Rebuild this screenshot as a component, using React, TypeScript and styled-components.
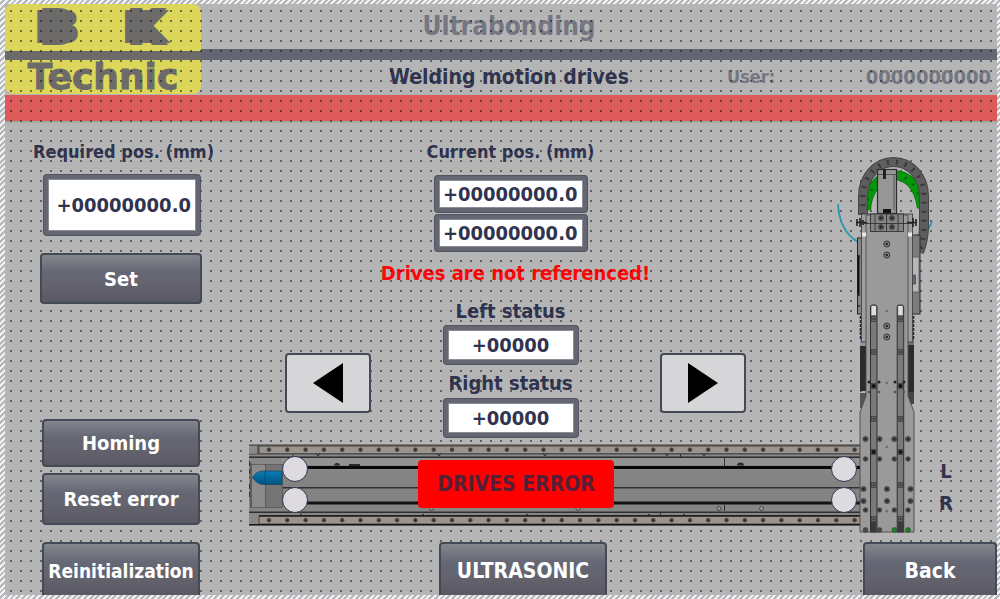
import React from "react";
import styled, { createGlobalStyle, css } from "styled-components";

const ink = "#31344f";
const faded = "#747682";
const steel = "#646672";
const edge = "#434a55";

const GlobalStyle = createGlobalStyle`
  *, *::before, *::after { box-sizing: border-box; }
  body { margin: 0; background: #b5b5b5; }
  body, button, input {
    font-family: "DejaVu Sans Condensed", "DejaVu Sans", Tahoma, sans-serif;
    font-size: 20px;
    font-weight: 700;
    line-height: 24px;
  }
`;

const Screen = styled.div`
  min-height: 100vh;
  padding: 4px 3px 4px 5px;
  background: repeating-linear-gradient(135deg, #f2f2f2 0 2px, #b4b8bd 2px 4px);
`;

/* Work area with the editor's 10px snap grid laid over everything but the controls. */
const Canvas = styled.div`
  position: relative;
  display: flex;
  flex-direction: column;
  min-height: calc(100vh - 8px);
  background: #b5b5b5;
  color: ${ink};

  &::after {
    content: "";
    position: absolute;
    inset: 0;
    z-index: 1;
    pointer-events: none;
    background: conic-gradient(from 0deg at 2px 2px, transparent 0 75%, rgba(20, 20, 24, 0.52) 75%) 5px 6px / 10px 10px;
  }
`;

const Header = styled.header`
  display: grid;
  grid-template-columns: 196px 90px 1fr 90px 180px;
  grid-template-rows: 45px 11px 35px;
  align-items: center;
`;

const Logo = styled.div`
  grid-area: 1 / 1 / 4 / 2;
  align-self: stretch;
  display: grid;
  grid-template-rows: 47px 9px 34px;
  margin-bottom: 1px;
  border-radius: 8px;
  background: #dcd65a;
  color: #6c6b69;
  font-family: "DejaVu Sans", sans-serif;
`;

const Initials = styled.div`
  display: grid;
  grid-template-columns: 1fr 1fr;
  padding: 0 12px 0 8px;
  justify-items: center;
  font-size: 44px;
  line-height: 47px;
  -webkit-text-stroke: 4px #6c6b69;
  text-shadow: -7px 0 #6c6b69, 7px 0 #6c6b69;
`;

const LogoBar = styled.div`
  background: #6c6b69;
`;

const LogoName = styled.div`
  text-align: center;
  font-size: 36px;
  line-height: 34px;
  -webkit-text-stroke: 1px #6c6b69;
`;

const Title = styled.h1`
  grid-area: 1 / 3;
  margin: 0;
  padding-bottom: 2px;
  text-align: center;
  font-size: 26px;
  line-height: 32px;
  color: ${faded};
`;

const Divider = styled.div`
  grid-area: 2 / 2 / 3 / 6;
  align-self: stretch;
  background: ${steel};
`;

const Subtitle = styled.h2`
  grid-area: 3 / 3;
  margin: 0;
  padding-bottom: 2px;
  text-align: center;
  white-space: nowrap;
  font-size: 21px;
`;

const UserLabel = styled.span`
  grid-area: 3 / 4;
  padding-bottom: 2px;
  font-size: 18px;
  color: ${faded};
`;

const UserName = styled.span`
  grid-area: 3 / 5;
  padding: 0 6px 2px 0;
  text-align: right;
  color: ${faded};
`;

const AlarmLine = styled.div`
  height: 28px;
  background: #dc5b5a;
  border-bottom: 2px solid #a2aca3;
`;

const Main = styled.main`
  flex: 1;
  display: grid;
  grid-template-columns: 244px minmax(0, 1fr) 100px 62px;
`;

const SidePanel = styled.section`
  display: flex;
  flex-direction: column;
  align-items: flex-start;
  padding: 17px 0 0 28px;
`;

const Label = styled.label`
  white-space: nowrap;
`;

const PositionLabel = styled(Label)`
  font-size: 18px;
`;

const Field = styled.input<{ $width: number; $height: number; $centered?: boolean }>`
  position: relative;
  z-index: 2;
  width: ${(p) => p.$width}px;
  height: ${(p) => p.$height}px;
  padding: 0 ${(p) => (p.$centered ? 0 : 5)}px 0 0;
  border: 5px solid ${steel};
  border-radius: 4px;
  outline: 1px solid #505460;
  outline-offset: -1px;
  background: #fff;
  box-shadow: inset 0 0 0 1px #8b8d98;
  color: ${ink};
  text-align: ${(p) => (p.$centered ? "center" : "right")};
`;

const raised = css`
  position: relative;
  z-index: 2;
  border: 2px solid ${edge};
  border-radius: 4px;
  padding: 0;
`;

const Button = styled.button<{ $width: number; $height: number }>`
  ${raised}
  width: ${(p) => p.$width}px;
  height: ${(p) => p.$height}px;
  background: linear-gradient(#84868d 0, #656775 36%, #64646f 60%, #5a5963 100%);
  color: #fff;
  white-space: nowrap;
`;

const PositionForm = styled.div`
  display: flex;
  flex-direction: column;
  gap: 10px;
  align-items: flex-start;

  ${Field} { margin-left: 10px; }
  ${Button} { margin: 7px 0 0 7px; }
`;

const DriveButtons = styled.div`
  display: flex;
  flex-direction: column;
  gap: 6px;
  margin: 115px 0 0 9px;
`;

const Stage = styled.section`
  padding-top: 17px;
`;

const Readings = styled.div`
  display: grid;
  grid-template-columns: 86px 1fr 86px;
  align-items: end;
  height: 299px;
  padding: 0 89px 0 36px;
`;

const JogButton = styled.button`
  ${raised}
  display: grid;
  place-items: center;
  height: 60px;
  margin-bottom: 26px;
  background: #d6d6d8;
`;

const Values = styled.div`
  align-self: start;
  display: flex;
  flex-direction: column;
  align-items: center;
`;

const ValueGroup = styled.div<{ $top: number; $gap: number }>`
  display: flex;
  flex-direction: column;
  align-items: center;
  margin-top: ${(p) => p.$top}px;
  padding-right: 10px;

  ${Label} { margin-bottom: ${(p) => p.$gap}px; }
  ${Field} + ${Field} { margin-top: 1px; }
`;

const Warning = styled.p`
  margin: 9px 0 0;
  white-space: nowrap;
  color: #ff0508;
`;

const RailArea = styled.div`
  position: relative;
  z-index: 2;
  height: 82px;
  margin: 5px -26px 0 0;
`;

const RailSvg = styled.svg`
  display: block;
  width: 100%;
  height: 82px;
`;

const Lamp = styled.span<{ $side: "left" | "right"; $row: number }>`
  position: absolute;
  top: ${(p) => (p.$row === 0 ? 12 : 43)}px;
  ${(p) => (p.$side === "left" ? "left: 33px;" : "right: 4px;")}
  width: 26px;
  height: 26px;
  border: 1px solid #34364f;
  border-radius: 50%;
  background: #dddbdf;
`;

const ErrorBanner = styled.div`
  position: absolute;
  top: 16px;
  left: 169px;
  right: 247px;
  height: 48px;
  border-radius: 4px;
  background: #f00;
  color: #542038;
  text-align: center;
  font-size: 21px;
  line-height: 48px;
`;

const ArmSvg = styled.svg`
  position: relative;
  z-index: 2;
  display: block;
  margin-top: 27px;
`;

const DriveNames = styled.div`
  display: flex;
  flex-direction: column;
  gap: 8px;
  padding: 336px 0 0 4px;
`;

const DriveName = styled.span`
  width: 14px;
  text-align: center;
`;

const Footer = styled.nav`
  display: grid;
  grid-template-columns: 244px 1fr 200px;
  height: 53px;
`;

const FooterCell = styled.div<{ $place: "start" | "center" | "end" }>`
  display: flex;
  justify-content: ${(p) => p.$place};
  padding-left: ${(p) => (p.$place === "start" ? 37 : 0)}px;
`;

/* Footer keys run past the lower edge of the screen. */
const FooterButton = styled(Button)<{ $long?: boolean }>`
  padding-top: 2px;
  border-bottom: 0;
  border-radius: 4px 4px 0 0;
  font-size: ${(p) => (p.$long ? 19 : 21)}px;
`;

function Bolt({ x, y, r = 2.6 }: { x: number; y: number; r?: number }) {
  return (
    <g>
      <circle cx={x} cy={y} r={r} fill="#4c4c4c" stroke="#383838" strokeWidth="0.6" />
      <circle cx={x} cy={y} r={r * 0.4} fill="#1c1c1c" />
    </g>
  );
}

function Rail() {
  const bolts = Array.from({ length: 33 }, (_, i) => 269 + i * 18.3);
  return (
    <RailSvg viewBox="249 444 612 82" preserveAspectRatio="none" aria-hidden="true">
      <defs>
        <linearGradient id="bed" x1="0" y1="0" x2="0" y2="1">
          <stop offset="0" stopColor="#8c8c8c" />
          <stop offset="0.5" stopColor="#828282" />
          <stop offset="1" stopColor="#888" />
        </linearGradient>
        <linearGradient id="tip" x1="0" y1="0" x2="0" y2="1">
          <stop offset="0" stopColor="#0a7cb8" />
          <stop offset="1" stopColor="#00547f" />
        </linearGradient>
      </defs>
      <rect x="249" y="444.5" width="612" height="81" fill="url(#bed)" />
      <rect x="249" y="444.5" width="612" height="1.5" fill="#555" />
      {[446, 516.5].map((y) => (
        <g key={y}>
          <rect x="259" y={y} width="602" height="7.5" fill="#9b938c" stroke="#4a4744" strokeWidth="1" />
          {bolts.map((x) => (
            <Bolt key={x} x={x} y={y + 3.7} r={1.9} />
          ))}
        </g>
      ))}
      <rect x="249" y="453.6" width="612" height="1.4" fill="#666" />
      <rect x="249" y="456.5" width="612" height="1.4" fill="#252525" />
      <rect x="282" y="458" width="579" height="7" fill="#939393" />
      <rect x="282" y="466" width="579" height="3" fill="#080808" />
      <rect x="282" y="487" width="579" height="1.5" fill="#303030" />
      <rect x="282" y="501.5" width="579" height="3" fill="#141414" />
      <rect x="249" y="511.5" width="612" height="1.5" fill="#303030" />
      <rect x="259" y="515" width="602" height="1.4" fill="#222" />
      <rect x="249" y="524" width="612" height="1.5" fill="#151515" />
      <path d="M251 463V508M258 446V454M724.5 457V466M680.5 454V457M293 454V457M724.5 505V511M660.5 512V516" stroke="#333" strokeWidth="1" />
      <path d="M249.5 461V478M249.5 484V500" stroke="#333" strokeWidth="1" strokeDasharray="5 3" />
      <rect x="251.5" y="464.5" width="14" height="43" fill="#8b8b8b" stroke="#555" strokeWidth="0.7" />
      <rect x="265.5" y="464.5" width="17" height="43" fill="#747474" stroke="#555" strokeWidth="0.7" />
      <path d="M252.5 477.5C256 472.5 259 471 264 471H282V484.5H264C259 484.5 256 482.5 252.5 477.5Z" fill="url(#tip)" stroke="#1b4460" strokeWidth="0.7" />
      <path d="M265 471V484.5" stroke="#064a70" strokeWidth="0.8" />
      <path d="M334 465.5a3 2.5 0 0 1 6 0ZM349 464h11v2h-11ZM737 465.5a3.5 3 0 0 1 7 0Z" fill="#2a2a2a" />
      <path d="M316 453l2 3 2-3M437 453l2 3 2-3M543 453l2 3 2-3M665 453l2 3 2-3M702 453l2 3 2-3M299 516l2-2 2 2M421 516l2-2 2 2M525 516l2-2 2 2M647 516l2-2 2 2M682 516l2-2 2 2" fill="none" stroke="#333" strokeWidth="1" />
      {[431.5, 578, 719, 761.5].map((x) => (
        <circle key={x} cx={x} cy="508.5" r="2" fill="#999" stroke="#333" strokeWidth="0.8" />
      ))}
    </RailSvg>
  );
}

function Arm() {
  const chain = "M863 215V196A30.5 34 0 0 1 924 196V225Q924 240 919 252";
  const hose = "M866 210C868 168 916 160 922 208";
  return (
    <ArmSvg width="100" height="384" viewBox="835 150 100 384" aria-hidden="true">
      <path d="M838 204C839 222 846 235 858 242" fill="none" stroke="#2798b3" strokeWidth="1.8" />
      <path d="M932 221Q930 228 926 231" fill="none" stroke="#2798b3" strokeWidth="1.8" />
      <path d={hose} fill="none" stroke="#087a12" strokeWidth="10" />
      <path d={hose} fill="none" stroke="#05980a" strokeWidth="8" />
      <path d={hose} fill="none" stroke="#125f16" strokeWidth="3" strokeDasharray="2 8" />
      <path d={chain} fill="none" stroke="#444" strokeWidth="10" />
      <path d={chain} fill="none" stroke="#5e5e5e" strokeWidth="8" />
      <path d={chain} fill="none" stroke="#3a3a3a" strokeWidth="5" strokeDasharray="2 7" />

      {/* side plates and carriers */}
      <rect x="857.5" y="238" width="5" height="76" fill="#858585" stroke="#222" strokeWidth="1" />
      <path d="M858.5 255V294" stroke="#111" strokeWidth="2" />
      <path d="M857 257h4M857 295h4M857 306h4M860.5 316V340M913.5 316V340" stroke="#222" strokeWidth="1.5" strokeDasharray="3 1" />
      <rect x="912" y="235" width="8" height="79" fill="#7c7c7c" stroke="#2b2b2b" strokeWidth="1" />
      <rect x="912.5" y="257" width="6.5" height="35" fill="#b6b6b8" stroke="#555" strokeWidth="0.7" />
      <rect x="912" y="275" width="3.5" height="9" fill="#71607a" stroke="#333" strokeWidth="0.6" />
      <rect x="860" y="339" width="7" height="7" fill="#9295aa" />
      <rect x="907" y="339" width="7" height="7" fill="#6f707c" />
      <rect x="860" y="346" width="6" height="45" fill="#2c2c2c" />
      <rect x="908" y="345" width="6" height="47" fill="#2c2c2c" />
      <rect x="860" y="393" width="6" height="15" fill="#555" />
      <rect x="908" y="392" width="6" height="12" fill="#444" />

      <rect x="861.5" y="214" width="51" height="128" fill="#9f9f9f" stroke="#4a4a4a" strokeWidth="1" />
      <path d="M866 215V396L860 412V532H914V412L908 396V215Z" fill="#9a9a9a" stroke="#4a4a4a" strokeWidth="0.9" />
      <rect x="862" y="232.5" width="4" height="4" fill="#e9e9e9" />
      <rect x="908" y="232.5" width="4" height="4" fill="#e9e9e9" />
      <path d="M857 219v7M860 218v9M863 220v5M856 222.5h11M913 218v9M916 219v7M907 222.5h10" stroke="#222" strokeWidth="1.6" />

      {/* motor */}
      <rect x="877.5" y="169.5" width="19" height="44" fill="#969696" stroke="#2c2c2c" strokeWidth="1.2" />
      <path d="M877 174.5h20M894 175v35" stroke="#444" strokeWidth="0.8" />
      <rect x="883" y="169" width="3" height="10" fill="#222" />
      <path d="M883 209h8v4h-8z" fill="#151515" />
      <rect x="870.5" y="214" width="33" height="17.5" fill="#858585" stroke="#333" strokeWidth="0.9" />
      <path d="M862 223.5H912M875 214v17M886.5 214v17M898 214v17" stroke="#333" strokeWidth="0.9" />
      {[881, 892].map((x) => (
        <g key={x}>
          <Bolt x={x} y={218} />
          <Bolt x={x} y={227} />
        </g>
      ))}
      {[244, 255, 326, 337].map((y) => (
        <g key={y}>
          <circle cx="886.8" cy={y} r="3" fill="#858585" stroke="#333" strokeWidth="1" />
          <circle cx="886.8" cy={y} r="1.2" fill="#222" />
        </g>
      ))}

      {/* guide rails */}
      {[870.5, 897.2].map((x) => (
        <g key={x}>
          <path d={`M${x} 532V307q0-2 2-2h2.5q2 0 2 2V532Z`} fill="#7a7a7a" stroke="#303030" strokeWidth="1" />
          <rect x={x + 1} y="306" width="4.5" height="9" fill="#dedede" />
          {[319, 352, 386, 419, 452, 485, 519].map((y) => (
            <g key={y}>
              <rect x={x + 1} y={y - 2.5} width="4.5" height="5" fill="#666" stroke="#333" strokeWidth="0.6" />
              <circle cx={x + 3.2} cy={y} r={y === 386 || y === 452 ? 2 : 1.3} fill={y === 386 || y === 452 ? "#111" : "#444"} />
            </g>
          ))}
          <rect x={x + 0.5} y="522" width="5.5" height="10" fill="#3a3a3a" />
        </g>
      ))}
      {[865.5, 879.5, 894.3, 908].map((x) => (
        <g key={x}>
          <Bolt x={x} y={439} />
          <Bolt x={x} y={459} r={2.3} />
          <Bolt x={x} y={510} r={2.3} />
          <circle cx={x} cy="530" r="2.4" fill={x > 890 ? "#138a1c" : "#4a4a4a"} stroke="#333" strokeWidth="0.6" />
        </g>
      ))}
      {[863.5, 887, 910.5].map((x) => (
        <g key={x}>
          <Bolt x={x} y={489} />
          <Bolt x={x} y={501} />
        </g>
      ))}
      {[869, 879, 895, 904].map((x) => (
        <g key={x}>
          <circle cx={x} cy="382" r="1.5" fill="#222" />
          <circle cx={x} cy="392" r="1.3" fill="#555" />
        </g>
      ))}
      {[311, 383, 447, 511].map((y) => (
        <circle key={y} cx="886.8" cy={y} r="1.2" fill="#6a6a6a" />
      ))}
    </ArmSvg>
  );
}

export default function App() {
  return (
    <>
      <GlobalStyle />
      <Screen>
        <Canvas>
          <Header>
            <Logo>
              <Initials>
                <span>B</span>
                <span>K</span>
              </Initials>
              <LogoBar />
              <LogoName>Technic</LogoName>
            </Logo>
            <Title>Ultrabonding</Title>
            <Divider />
            <Subtitle>Welding motion drives</Subtitle>
            <UserLabel>User:</UserLabel>
            <UserName>0000000000</UserName>
          </Header>
          <AlarmLine />

          <Main>
            <SidePanel>
              <PositionForm>
                <PositionLabel htmlFor="required">Required pos. (mm)</PositionLabel>
                <Field id="required" $width={158} $height={62} defaultValue="+00000000.0" />
                <Button type="button" $width={162} $height={51}>Set</Button>
              </PositionForm>
              <DriveButtons>
                <Button type="button" $width={158} $height={48}>Homing</Button>
                <Button type="button" $width={158} $height={52}>Reset error</Button>
              </DriveButtons>
            </SidePanel>

            <Stage>
              <Readings>
                <JogButton type="button" aria-label="Move left">
                  <svg width="32" height="40" viewBox="0 0 32 40" aria-hidden="true">
                    <path d="M31 0V40L1 20Z" />
                  </svg>
                </JogButton>
                <Values>
                  <ValueGroup $top={0} $gap={11}>
                    <PositionLabel htmlFor="left-pos">Current pos. (mm)</PositionLabel>
                    <Field id="left-pos" $width={154} $height={38} readOnly value="+00000000.0" />
                    <Field aria-label="Current position, right" $width={154} $height={38} readOnly value="+00000000.0" />
                  </ValueGroup>
                  <Warning role="alert">Drives are not referenced!</Warning>
                  <ValueGroup $top={14} $gap={2}>
                    <Label htmlFor="left-status">Left status</Label>
                    <Field id="left-status" $width={136} $height={40} $centered readOnly value="+00000" />
                  </ValueGroup>
                  <ValueGroup $top={6} $gap={3}>
                    <Label htmlFor="right-status">Right status</Label>
                    <Field id="right-status" $width={136} $height={40} $centered readOnly value="+00000" />
                  </ValueGroup>
                </Values>
                <JogButton type="button" aria-label="Move right">
                  <svg width="32" height="40" viewBox="0 0 32 40" aria-hidden="true">
                    <path d="M1 0V40L31 20Z" />
                  </svg>
                </JogButton>
              </Readings>
              <RailArea>
                <Rail />
                <Lamp $side="left" $row={0} />
                <Lamp $side="left" $row={1} />
                <Lamp $side="right" $row={0} />
                <Lamp $side="right" $row={1} />
                <ErrorBanner>DRIVES ERROR</ErrorBanner>
              </RailArea>
            </Stage>

            <Arm />

            <DriveNames>
              <DriveName>L</DriveName>
              <DriveName>R</DriveName>
            </DriveNames>
          </Main>

          <Footer>
            <FooterCell $place="start">
              <FooterButton type="button" $long $width={158} $height={53}>Reinitialization</FooterButton>
            </FooterCell>
            <FooterCell $place="center">
              <FooterButton type="button" $width={168} $height={53}>ULTRASONIC</FooterButton>
            </FooterCell>
            <FooterCell $place="end">
              <FooterButton type="button" $width={134} $height={53}>Back</FooterButton>
            </FooterCell>
          </Footer>
        </Canvas>
      </Screen>
    </>
  );
}
